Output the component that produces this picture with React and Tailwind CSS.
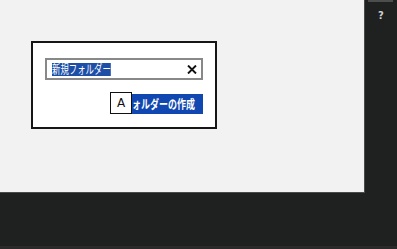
import React from "react";

const jp = { fontFamily: '"Noto Sans CJK JP", "Noto Sans", sans-serif' };

function CloseIcon() {
  return (
    <svg width="10" height="9" viewBox="0 0 10 9" className="shrink-0">
      <path d="M1 0.5 L9 8.5 M9 0.5 L1 8.5" stroke="#111" strokeWidth="1.9" />
    </svg>
  );
}

function NewFolderDialog() {
  return (
    <div className="flex h-[88px] w-[186px] flex-col border-2 border-[#161616] bg-white px-3 pt-[15px]">
      <div className="flex h-[22px] items-center border-2 border-[#888888] pl-[5px] pr-[4px]">
        <span
          className="inline-flex h-[13px] origin-left scale-x-[0.7] items-center whitespace-nowrap bg-[#1e4fa6] text-[12px] leading-none text-white"
          style={jp}
        >
          新規フォルダー
        </span>
        <span className="flex-1" />
        <CloseIcon />
      </div>
      <div className="mt-[14px] flex justify-end">
        <div className="relative flex h-5 w-[85px] items-center justify-end bg-[#1147b0] pr-[8px]">
          <span
            className="origin-right scale-x-[0.75] whitespace-nowrap text-[12px] font-bold leading-none text-white"
            style={jp}
          >
            ォルダーの作成
          </span>
          <div
            className="absolute -left-2 -top-[2px] flex h-[22px] w-[22px] items-center justify-center border border-[#111] bg-white text-[12px] text-[#111]"
            style={{ fontFamily: '"DejaVu Sans", sans-serif' }}
          >
            A
          </div>
        </div>
      </div>
    </div>
  );
}

export default function App() {
  return (
    <div className="flex h-[249px] w-[397px] flex-col overflow-hidden bg-[#1f2020]">
      <div className="flex h-[193px]">
        <div className="h-[193px] w-[365px] border-b border-r border-[#4a4a4a] bg-[#f2f2f2] pl-[31px] pt-[41px]">
          <NewFolderDialog />
        </div>
        <div className="flex flex-1 flex-col items-center">
          <div className="ml-[3px] mr-[4px] h-[2px] self-stretch bg-[#4d4d4d]" />
          <span
            className="mt-[9px] text-[10px] font-bold leading-none text-[#cfcfcf]"
            style={{ fontFamily: '"DejaVu Sans", sans-serif' }}
          >
            ?
          </span>
        </div>
      </div>
      <div className="flex-1 border-b-[3px] border-[#2a2a2a]" />
    </div>
  );
}
